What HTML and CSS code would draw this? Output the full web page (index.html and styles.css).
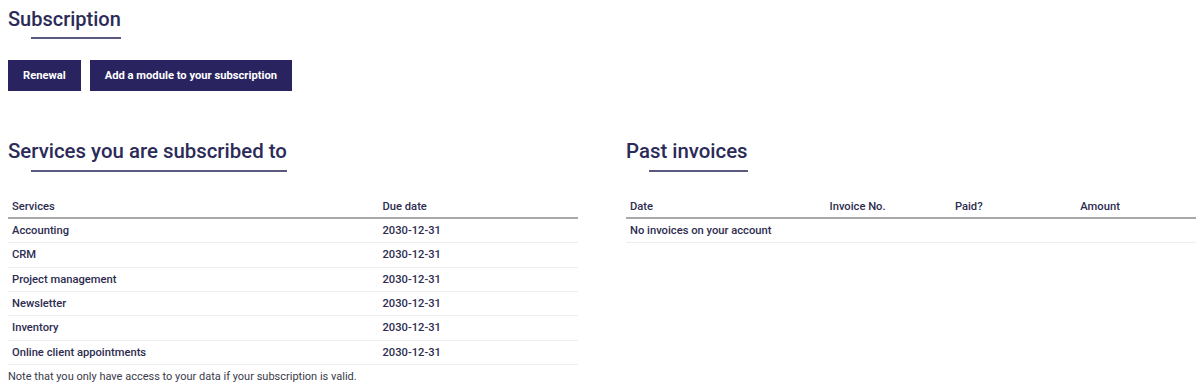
FILE: index.html
```html
<!DOCTYPE html>
<html lang="en">
<head>
    <meta charset="UTF-8">
    <meta name="viewport" content="width=device-width, initial-scale=1.0">
    <title>Subscription</title>
    <link rel="stylesheet" href="styles.css">
</head>
<body>
    <h1 class="title">Subscription</h1>

    <div class="actions">
        <button type="button">Renewal</button>
        <button type="button">Add a module to your subscription</button>
    </div>

    <div class="columns">
        <div class="column">
            <h2 class="title">Services you are subscribed to</h2>
            <table>
                <thead>
                    <tr>
                        <th class="col-service">Services</th>
                        <th>Due date</th>
                    </tr>
                </thead>
                <tbody>
                    <tr><td>Accounting</td><td>2030-12-31</td></tr>
                    <tr><td>CRM</td><td>2030-12-31</td></tr>
                    <tr><td>Project management</td><td>2030-12-31</td></tr>
                    <tr><td>Newsletter</td><td>2030-12-31</td></tr>
                    <tr><td>Inventory</td><td>2030-12-31</td></tr>
                    <tr><td>Online client appointments</td><td>2030-12-31</td></tr>
                </tbody>
            </table>
            <p class="note">Note that you only have access to your data if your subscription is valid.</p>
        </div>

        <div class="column">
            <h2 class="title">Past invoices</h2>
            <table>
                <thead>
                    <tr>
                        <th class="col-date">Date</th>
                        <th class="col-number">Invoice No.</th>
                        <th class="col-paid">Paid?</th>
                        <th>Amount</th>
                    </tr>
                </thead>
                <tbody>
                    <tr><td colspan="4">No invoices on your account</td></tr>
                </tbody>
            </table>
        </div>
    </div>
</body>
</html>
```

FILE: styles.css
```css
body {
    font-family: Roboto, "Noto Sans", sans-serif;
    margin: 8px 4px 8px 8px;
    color: #2d2c50;
    background: #fff;
}

.title {
    display: inline-block;
    margin: 0;
    color: #2c2b58;
    line-height: 1.1;
}

.title::after {
    content: "";
    display: block;
    height: 2px;
    margin-left: 23px;
    background: #5a5980;
}

h1.title {
    font-size: 20px;
    font-weight: 500;
}

h1.title::after {
    margin-top: 7px;
}

h2.title {
    font-size: 20.4px;
    font-weight: 500;
}

h2.title::after {
    margin-top: 8px;
}

.actions {
    display: flex;
    gap: 9px;
    margin-top: 21px;
}

button {
    height: 31px;
    padding: 0 15px;
    background-color: #29235f;
    color: white;
    border: none;
    font-family: inherit;
    font-size: 11.2px;
    font-weight: 700;
    cursor: pointer;
}

button:hover {
    background-color: #3a3478;
}

.columns {
    display: grid;
    grid-template-columns: 1fr 1fr;
    gap: 48px;
    margin-top: 49px;
}

table {
    width: 100%;
    border-collapse: collapse;
    margin-top: 23px;
    font-size: 11.2px;
}

th {
    text-align: left;
    font-weight: 500;
    padding: 5px 4px 3px;
    line-height: 13.4px;
    border-bottom: 2px solid #a9a9ab;
}

td {
    font-weight: 500;
    padding: 5px 4px 5px;
    border-bottom: 1px solid #eeeef0;
    line-height: 13.4px;
}

.col-service {
    width: 65%;
}

.col-date {
    width: 35%;
}

.col-number {
    width: 22%;
}

.col-paid {
    width: 22%;
}

.note {
    margin: 5px 0 0;
    font-size: 11px;
    color: #3a3a4a;
}
```
